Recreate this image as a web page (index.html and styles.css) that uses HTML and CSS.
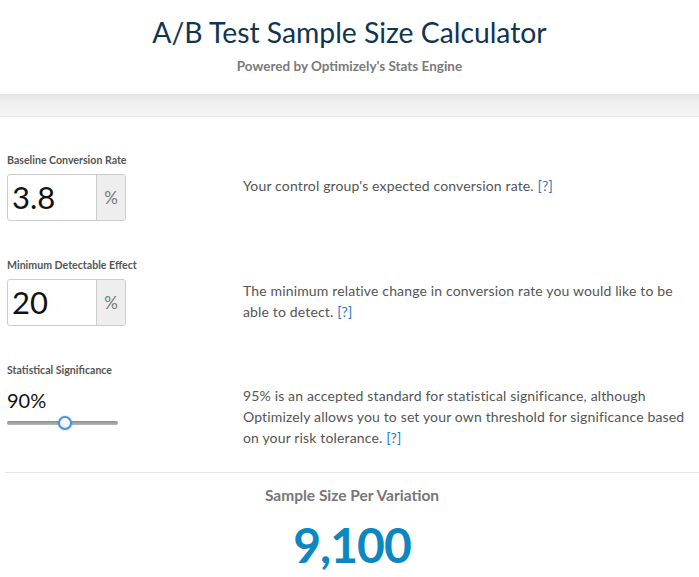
FILE: index.html
```html
<!DOCTYPE html>
<html lang="en">
<head>
<meta charset="utf-8">
<title>A/B Test Sample Size Calculator</title>
<link rel="stylesheet" href="styles.css">
</head>
<body>
<header class="header">
  <h1 class="title">A/B Test Sample Size Calculator</h1>
  <p class="subtitle">Powered by Optimizely's Stats Engine</p>
</header>
<div class="band"></div>
<main class="content">
  <section class="row">
    <div class="field">
      <label class="label">Baseline Conversion Rate</label>
      <div class="input-group">
        <span class="input-value">3.8</span>
        <span class="addon">%</span>
      </div>
    </div>
    <p class="desc">Your control group's expected conversion rate. <a class="help">[?]</a></p>
  </section>
  <section class="row">
    <div class="field">
      <label class="label">Minimum Detectable Effect</label>
      <div class="input-group">
        <span class="input-value">20</span>
        <span class="addon">%</span>
      </div>
    </div>
    <p class="desc">The minimum relative change in conversion rate you would like to be able to detect. <a class="help">[?]</a></p>
  </section>
  <section class="row">
    <div class="field">
      <label class="label">Statistical Significance</label>
      <div class="sig-value">90%</div>
      <input class="slider" type="range" min="80" max="99" value="90">
    </div>
    <p class="desc">95% is an accepted standard for statistical significance, although Optimizely allows you to set your own threshold for significance based on your risk tolerance. <a class="help">[?]</a></p>
  </section>
  <div class="result">
    <h2 class="result-label">Sample Size Per Variation</h2>
    <div class="result-value">9,100</div>
  </div>
</main>
</body>
</html>
```

FILE: styles.css
```css
* { box-sizing: border-box; }
html, body { margin: 0; padding: 0; }
body {
  font-family: "Lato", "Liberation Sans", sans-serif;
  background: #fff;
  color: #333;
  overflow: hidden;
}
.header {
  height: 94px;
  text-align: center;
  padding-top: 15px;
}
.title {
  margin: 0;
  font-size: 28.3px;
  font-weight: 400;
  line-height: 34px;
  color: #0f3550;
}
.subtitle {
  margin: 9px 0 0;
  font-size: 13.5px;
  font-weight: 700;
  color: #7a7a7a;
  line-height: 16px;
}
.band {
  height: 23px;
  background: linear-gradient(#e4e4e4, #f1f1f1 40%, #f4f4f4);
  border-bottom: 1px solid #e6e6e6;
}
.content {
  padding: 36px 0 0 7px;
}
.row {
  display: flex;
  margin-bottom: 37px;
}
.field {
  width: 236px;
  flex: none;
  display: flex;
  flex-direction: column;
  align-items: flex-start;
}
.label {
  font-size: 10.6px;
  font-weight: 700;
  line-height: 14px;
  color: #555;
}
.input-group {
  margin-top: 7px;
  display: flex;
  width: 119px;
  height: 47px;
  border: 1px solid #ccc;
  border-radius: 3px;
  overflow: hidden;
}
.input-value {
  flex: 1;
  font-size: 31px;
  line-height: 45px;
  padding-left: 4px;
  color: #111;
}
.addon {
  width: 29px;
  background: #eee;
  border-left: 1px solid #ccc;
  font-size: 17px;
  color: #777;
  display: flex;
  align-items: center;
  justify-content: center;
}
.sig-value {
  margin-top: 10px;
  font-size: 20px;
  line-height: 26px;
  color: #111;
}
.slider {
  -webkit-appearance: none;
  appearance: none;
  margin: 3px 0 0;
  width: 111px;
  height: 14px;
  background: transparent;
}
.slider::-webkit-slider-runnable-track {
  height: 4px;
  border-radius: 2px;
  background: linear-gradient(#8d8d8d, #b8b8b8);
  border: none;
}
.slider::-webkit-slider-thumb {
  -webkit-appearance: none;
  width: 14px;
  height: 14px;
  margin-top: -5px;
  border-radius: 50%;
  background: linear-gradient(#fff, #e9eef4);
  border: 2px solid #4a90e2;
  box-shadow: 0 0 2px rgba(74,144,226,0.6);
}
.desc {
  margin: 0;
  padding-top: 22px;
  font-size: 14px;
  letter-spacing: 0.15px;
  line-height: 21px;
  color: #555;
  max-width: 450px;
}
.help {
  color: #1a7dc4;
}
.result {
  border-top: 1px solid #e6e6e6;
  margin-top: -13px;
  margin-left: -2px;
  text-align: center;
  padding-top: 13px;
}
.result-label {
  margin: 0;
  font-size: 15.5px;
  font-weight: 700;
  line-height: 18px;
  color: #777;
}
.result-value {
  margin-top: 14px;
  font-size: 48px;
  font-weight: 700;
  letter-spacing: -1px;
  line-height: 54px;
  color: #0b87c1;
}
```
